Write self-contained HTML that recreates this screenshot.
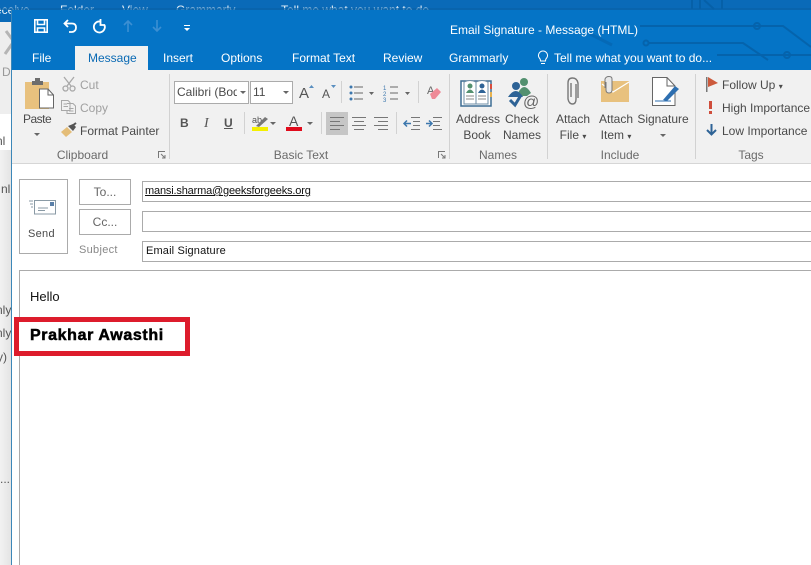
<!DOCTYPE html>
<html><head><meta charset="utf-8"><style>
html,body{margin:0;padding:0;width:811px;height:565px;overflow:hidden}
#p{width:811px;height:565px;position:relative;overflow:hidden;background:#fff;font-family:"Liberation Sans",sans-serif;font-size:12px;color:#4a4a4a}
.a{position:absolute;white-space:nowrap;line-height:15px}
.b{position:absolute}
.c{text-align:center}
.w{color:#fff}
.g{color:#6a6a6a}
svg{position:absolute;overflow:visible}
.sep{position:absolute;width:1px;background:#d2d2d2}
.box{position:absolute;border:1px solid #ababab;background:#fff;box-sizing:border-box}
.caret{position:absolute;width:0;height:0;border-left:3px solid transparent;border-right:3px solid transparent;border-top:3px solid #666}
</style></head><body><div id="p">
<!-- background window -->
<div class="b" style="left:0;top:0;width:811px;height:22px;background:#0a6ab8"></div>
<div class="b" style="left:0;top:22px;width:11px;height:92px;background:#eeeeee"></div>
<div class="b" style="left:0;top:114px;width:11px;height:36px;background:#fff"></div>
<div class="b" style="left:0;top:150px;width:11px;height:415px;background:linear-gradient(90deg,#f2f2f2,#e4e4e4)"></div>
<svg style="left:0;top:0" width="12" height="60" fill="none" stroke="#b5b5b5" stroke-width="3"><path d="M6 31L12 39 M5 54L12 44"/></svg>
<div class="a w" style="left:-5px;top:3px;opacity:.9">eceive</div>
<div class="a w" style="left:60px;top:3px;opacity:.9">Folder</div>
<div class="a w" style="left:122px;top:3px;opacity:.9">View</div>
<div class="a w" style="left:176px;top:3px;opacity:.9">Grammarly</div>
<div class="a w" style="left:281px;top:3px;opacity:.9">Tell me what you want to do...</div>
<div class="b" style="left:0;top:8px;width:811px;height:2px;background:#0862a8;opacity:.7"></div>
<svg style="left:690px;top:0" width="36" height="10" fill="none" stroke="#0660a8" stroke-width="2"><path d="M2 0V9 M10 0V9 M14 0L24 9 M32 0V9"/></svg>
<div class="a" style="left:2px;top:65px;color:#999">D</div>
<div class="a" style="left:-4px;top:134px;color:#555">nl</div>
<div class="a" style="left:1px;top:182px;color:#555">nl</div>
<div class="a" style="left:-4px;top:303px;color:#555">nly</div>
<div class="a" style="left:-4px;top:326px;color:#555">nly</div>
<div class="a" style="left:-3px;top:350px;color:#555">y)</div>
<div class="a" style="left:0;top:472px;color:#555">...</div>
<!-- window -->
<div class="b" style="left:11px;top:10px;width:800px;height:555px;background:#fff;border-left:1px solid #3c87b8;box-sizing:border-box"></div>
<div class="b" style="left:12px;top:10px;width:799px;height:60px;background:#0574c6"></div>
<svg style="left:0;top:0" width="811" height="70" fill="none" stroke="#0563ac" stroke-width="2">
<path d="M640 26H783L811 47 M648 43H743L768 60 M717 55H811"/>
<path d="M590 34L612 45" stroke-width="3" opacity=".6"/>
<circle cx="757" cy="26" r="3"/><circle cx="787" cy="55" r="3"/><circle cx="646" cy="43" r="2.500"/>
</svg>
<!-- QAT -->
<svg style="left:34px;top:19px" width="14" height="14" fill="none" stroke="#fff" stroke-width="1.600"><path d="M.8.8H13.200V13.200H.8Z M3.500 1V5.500H10.500V1 M3.500 13V9H10.500V13"/></svg>
<svg style="left:63px;top:19px" width="14" height="14" fill="none" stroke="#fff" stroke-width="1.800"><path d="M5 1L1.500 4.500L5 8 M2 4.500H9Q13 4.500 13 8.500T9 13H6"/></svg>
<svg style="left:92px;top:19px" width="14" height="14" fill="none" stroke="#fff" stroke-width="1.800"><path d="M8 2.500A5.500 5.500 0 1 0 12.500 6 M8.500 0V6H13"/></svg>
<svg style="left:123px;top:20px" width="10" height="12" fill="none" stroke="#3c8fd2" stroke-width="1.600"><path d="M1 5L5 1L9 5 M5 1V12"/></svg>
<svg style="left:152px;top:20px" width="10" height="12" fill="none" stroke="#3c8fd2" stroke-width="1.600"><path d="M1 7L5 11L9 7 M5 0V11"/></svg>
<svg style="left:183px;top:25px" width="8" height="7" fill="#fff"><path d="M1 0H7V1H1Z M1 3H7L4 6Z"/></svg>
<div class="a w" style="left:450px;top:23px">Email Signature - Message (HTML)</div>
<!-- tabs -->
<div class="b" style="left:75px;top:46px;width:73px;height:24px;background:#f1f1f1"></div>
<div class="a w" style="left:32px;top:51px">File</div>
<div class="a" style="left:88px;top:51px;color:#0a6ab4">Message</div>
<div class="a w" style="left:163px;top:51px">Insert</div>
<div class="a w" style="left:221px;top:51px">Options</div>
<div class="a w" style="left:292px;top:51px">Format Text</div>
<div class="a w" style="left:383px;top:51px">Review</div>
<div class="a w" style="left:449px;top:51px">Grammarly</div>
<svg style="left:537px;top:51px" width="12" height="14" fill="none" stroke="#fff"><path d="M3.500 10Q3.500 8 2 6.500A4.500 4.500 0 1 1 10 6.500Q8.500 8 8.500 10Z M4 12.500H8"/></svg>
<div class="a w" style="left:554px;top:51px">Tell me what you want to do...</div>
<!-- ribbon -->
<div class="b" style="left:12px;top:70px;width:799px;height:93px;background:#f1f1f1;border-bottom:1px solid #d6d6d6"></div>
<div class="sep" style="left:169px;top:74px;height:85px"></div>
<div class="sep" style="left:449px;top:74px;height:85px"></div>
<div class="sep" style="left:547px;top:74px;height:85px"></div>
<div class="sep" style="left:695px;top:74px;height:85px"></div>
<!-- paste -->
<svg style="left:25px;top:78px" width="29" height="31"><rect y="4" width="24" height="27" fill="#e8c17e"/><path d="M7 5V3H10V0H15V3H18V5V7H7Z" fill="#6d6d6d"/><path d="M14.500 11H23L28.500 17V30H14.500Z" fill="#fff" stroke="#666"/><path d="M23 11V17H28.500" fill="none" stroke="#666"/></svg>
<div class="a" style="left:23px;top:112px;letter-spacing:-.5px">Paste</div>
<div class="caret" style="left:34px;top:133px"></div>
<svg style="left:62px;top:77px" width="14" height="15" fill="none" stroke="#a8a8a8" stroke-width="1.300"><path d="M2 0L9 9 M12 0L5 9"/><circle cx="3.500" cy="11.500" r="2.500"/><circle cx="10.500" cy="11.500" r="2.500"/></svg>
<div class="a" style="left:80px;top:78px;color:#a0a0a0">Cut</div>
<svg style="left:61px;top:100px" width="15" height="14" fill="none" stroke="#a8a8a8"><path d="M.5.5H7L9 2.500V10.500H.5Z M6 3.500H12L14.500 6V13.500H6V10.500 M2.500 4H6 M2.500 6.500H7 M8 8.500H12.500 M8 11H12.500"/></svg>
<div class="a" style="left:80px;top:101px;color:#a0a0a0">Copy</div>
<svg style="left:61px;top:123px" width="16" height="14"><path d="M0 9L6 4L11 9L5 14Z" fill="#e4bd78"/><path d="M7 3L12 8L15 4L12 1Z" fill="#555"/><path d="M11 3L15 0" stroke="#555" stroke-width="2"/></svg>
<div class="a" style="left:80px;top:124px">Format Painter</div>
<div class="a c g" style="left:30px;top:148px;width:105px">Clipboard</div>
<svg style="left:158px;top:151px" width="8" height="8" fill="none" stroke="#777"><path d="M.5 7V.5H7 M3 3L7 7 M7 4V7H4"/></svg>
<!-- font -->
<div class="box" style="left:174px;top:81px;width:75px;height:23px"></div>
<div class="a" style="left:177px;top:85px;width:60px;overflow:hidden">Calibri (Body)</div>
<div class="caret" style="left:240px;top:91px"></div>
<div class="box" style="left:250px;top:81px;width:43px;height:23px"></div>
<div class="a" style="left:253px;top:85px">11</div>
<div class="caret" style="left:283px;top:91px"></div>
<div class="a" style="left:299px;top:85px;font-size:15px;line-height:17px;color:#555">A</div>
<div class="a" style="left:322px;top:87px;color:#555">A</div>
<svg style="left:309px;top:85px" width="27" height="4"><path d="M0 3L2.500 0L5 3Z M22 0H27L24.500 3Z" fill="#5a8fc0"/></svg>
<div class="sep" style="left:341px;top:81px;height:22px"></div>
<svg style="left:349px;top:84px" width="60" height="17" fill="none"><path d="M5 3H14 M5 9H14 M5 15H14 M41 3H49 M41 9H49 M41 15H49" stroke="#666"/><circle cx="2" cy="3" r="1.500" fill="#3c77ad"/><circle cx="2" cy="9" r="1.500" fill="#3c77ad"/><circle cx="2" cy="15" r="1.500" fill="#3c77ad"/><path d="M20 8H25L22.500 11Z M56 8H61L58.500 11Z" fill="#666"/><text x="34" y="6" font-size="6" fill="#3c77ad" font-family="Liberation Sans">1</text><text x="34" y="12" font-size="6" fill="#3c77ad" font-family="Liberation Sans">2</text><text x="34" y="18" font-size="6" fill="#3c77ad" font-family="Liberation Sans">3</text></svg>
<div class="sep" style="left:418px;top:81px;height:22px"></div>
<svg style="left:427px;top:84px" width="15" height="16"><text x="0" y="10" font-size="11" fill="#666" font-family="Liberation Sans">A</text><path d="M3 10L10 4L14 8L8 15H5Z" fill="#ee8a97"/></svg>
<div class="a" style="left:180px;top:116px;font-weight:bold;color:#555">B</div>
<div class="a" style="left:204px;top:116px;font-style:italic;font-family:'Liberation Serif',serif;font-size:14px;color:#555">I</div>
<div class="a" style="left:224px;top:116px;font-weight:bold;color:#555;text-decoration:underline">U</div>
<div class="sep" style="left:244px;top:112px;height:22px"></div>
<svg style="left:252px;top:115px" width="16" height="17"><text x="0" y="8" font-size="9" fill="#555" font-family="Liberation Sans">ab</text><path d="M4 11L13 2L16 4L7 12Z" fill="#777"/><rect y="12" width="16" height="4" fill="#f4f000"/></svg>
<div class="caret" style="left:270px;top:122px"></div>
<div class="a" style="left:289px;top:114px;font-size:14px;color:#555">A</div>
<div class="b" style="left:286px;top:127px;width:16px;height:4px;background:#e00b1c"></div>
<div class="caret" style="left:307px;top:122px"></div>
<div class="sep" style="left:321px;top:112px;height:22px"></div>
<div class="b" style="left:326px;top:112px;width:22px;height:23px;background:#c6c6c6"></div>
<svg style="left:330px;top:117px" width="60" height="13" fill="none" stroke="#777"><path d="M0 .5H14 M0 4.500H10 M0 8.500H14 M0 12.500H10 M22 .5H36 M24 4.500H34 M22 8.500H36 M24 12.500H34 M44 .5H58 M48 4.500H58 M44 8.500H58 M48 12.500H58"/></svg>
<div class="sep" style="left:396px;top:112px;height:22px"></div>
<svg style="left:404px;top:117px" width="39" height="13" fill="none"><path d="M7 .5H16 M9 4.500H16 M9 8.500H16 M7 12.500H16 M29 .5H38 M29 4.500H36 M29 8.500H36 M29 12.500H38" stroke="#777"/><path d="M0 6.500H7 M3 3.500L0 6.500L3 9.500 M22 6.500H28 M25 3.500L28 6.500L25 9.500" stroke="#3c77ad" stroke-width="1.500"/></svg>
<div class="a c g" style="left:270px;top:148px;width:62px">Basic Text</div>
<svg style="left:438px;top:151px" width="8" height="8" fill="none" stroke="#777"><path d="M.5 7V.5H7 M3 3L7 7 M7 4V7H4"/></svg>
<!-- names -->
<svg style="left:461px;top:79px" width="32" height="28"><path d="M0 2H30V27H0Z" fill="#fff" stroke="#3d6d94" stroke-width="1.500"/><path d="M3 3Q9 0 15 3V25H3Z M15 3Q21 0 27 3V25H15Z" fill="#fff" stroke="#6d8da6"/><circle cx="9" cy="7" r="2.500" fill="#53906f"/><path d="M5 14Q9 7 13 14Z" fill="#53906f"/><circle cx="21" cy="7" r="2.500" fill="#2e6396"/><path d="M17 14Q21 7 25 14Z" fill="#2e6396"/><path d="M5 17H13M5 20H13M17 17H25M17 20H25" stroke="#888"/><rect x="29" y="5" width="2" height="5" fill="#d94d3d"/><rect x="29" y="13" width="2" height="5" fill="#e8b24d"/></svg>
<div class="a c" style="left:456px;top:111px;width:42px;line-height:16px">Address<br>Book</div>
<svg style="left:507px;top:78px" width="32" height="30"><circle cx="17" cy="4" r="4" fill="#53906f"/><path d="M11 15Q17 3 24 15L20 18H13Z" fill="#53906f"/><circle cx="9" cy="8" r="4" fill="#2e6396"/><path d="M1 19Q9 7 16 19Z" fill="#2e6396"/><path d="M3 22L8 27L14 17" fill="none" stroke="#2e6396" stroke-width="3"/><text x="16" y="29" font-size="16" fill="#666" font-family="Liberation Sans">@</text></svg>
<div class="a c" style="left:501px;top:111px;width:42px;line-height:16px">Check<br>Names</div>
<div class="a c g" style="left:468px;top:148px;width:60px">Names</div>
<!-- include -->
<svg style="left:566px;top:77px" width="14" height="28" fill="none" stroke="#777" stroke-width="1.400"><path d="M10 7V22Q10 27 6.500 27T2 22V6Q2 1 6.500 1T12 6V21 M5 6V20"/></svg>
<div class="a c" style="left:552px;top:111px;width:42px;line-height:16px">Attach<br>File <span style="font-size:8px">▾</span></div>
<svg style="left:601px;top:76px" width="29" height="27"><rect y="5" width="28" height="21" fill="#e8c17e"/><path d="M1 8L12 16L28 6" fill="none" stroke="#fff" stroke-width="1.200"/><path d="M5 6V14Q5 17 8 17T11 14V3Q11 .5 8 .5T4 3V12" fill="#e8e8e8" stroke="#777"/></svg>
<div class="a c" style="left:595px;top:111px;width:42px;line-height:16px">Attach<br>Item <span style="font-size:8px">▾</span></div>
<svg style="left:652px;top:77px" width="29" height="30"><path d="M.5.5H15L23 9V28.500H.5Z" fill="#fff" stroke="#666"/><path d="M15 1V9H23" fill="none" stroke="#666"/><path d="M3 24H19" stroke="#2e6fb0"/><path d="M11 23L23 9L27 12L15 24Z" fill="#2e6fb0"/></svg>
<div class="a c" style="left:633px;top:112px;width:60px">Signature</div>
<div class="caret" style="left:660px;top:134px"></div>
<div class="a c g" style="left:590px;top:148px;width:60px">Include</div>
<!-- tags -->
<svg style="left:706px;top:77px" width="12" height="15"><rect width="1.500" height="15" fill="#777"/><path d="M2 0L12 6L2 10Z" fill="#cc5a3c"/></svg>
<div class="a" style="left:722px;top:78px">Follow Up <span style="font-size:8px">▾</span></div>
<div class="b" style="left:709px;top:101px;width:3px;height:8px;background:#cf4d3b"></div>
<div class="b" style="left:709px;top:111px;width:3px;height:3px;background:#cf4d3b"></div>
<div class="a" style="left:722px;top:101px">High Importance</div>
<svg style="left:706px;top:124px" width="11" height="12" fill="none" stroke="#2e6396" stroke-width="2"><path d="M5.500 0V10 M1 6L5.500 10.500L10 6"/></svg>
<div class="a" style="left:722px;top:124px">Low Importance</div>
<div class="a c g" style="left:721px;top:148px;width:60px">Tags</div>
<!-- compose -->
<div class="box" style="left:19px;top:179px;width:49px;height:75px"></div>
<svg style="left:29px;top:200px" width="27" height="15" fill="none" stroke="#8a9aa5"><path d="M5.500.5H26.500V14H5.500Z M9 8H19 M9 10.500H16 M0 1H4 M1 4H4 M2 7H4"/><rect x="21" y="2" width="4" height="4" fill="#5a7fa8" stroke="none"/></svg>
<div class="a" style="left:28px;top:227px;font-size:11px;letter-spacing:.3px">Send</div>
<div class="box" style="left:79px;top:179px;width:52px;height:26px"></div>
<div class="a c" style="left:79px;top:185px;width:52px;color:#666">To...</div>
<div class="box" style="left:79px;top:209px;width:52px;height:26px"></div>
<div class="a c" style="left:79px;top:215px;width:52px;color:#666">Cc...</div>
<div class="a" style="left:79px;top:243px;color:#888;font-size:11px;letter-spacing:.3px">Subject</div>
<div class="box" style="left:142px;top:181px;width:680px;height:21px"></div>
<div class="a" style="left:145px;top:184px;color:#111;font-size:11px;letter-spacing:-.17px;text-decoration:underline">mansi.sharma@geeksforgeeks.org</div>
<div class="box" style="left:142px;top:211px;width:680px;height:21px"></div>
<div class="box" style="left:142px;top:241px;width:680px;height:21px"></div>
<div class="a" style="left:146px;top:244px;color:#111;font-size:11px;letter-spacing:.15px">Email Signature</div>
<div class="box" style="left:19px;top:270px;width:810px;height:310px"></div>
<div class="a" style="left:30px;top:289px;color:#111;font-size:13px">Hello</div>
<div class="b" style="left:14px;top:317px;width:176px;height:39px;border:5px solid #dd1c2c;box-sizing:border-box;background:#fff"></div>
<div class="a" style="left:30px;top:328px;color:#000;font-size:16px;font-weight:bold;letter-spacing:.62px;-webkit-text-stroke:.5px #000">Prakhar Awasthi</div>
</div></body></html>
